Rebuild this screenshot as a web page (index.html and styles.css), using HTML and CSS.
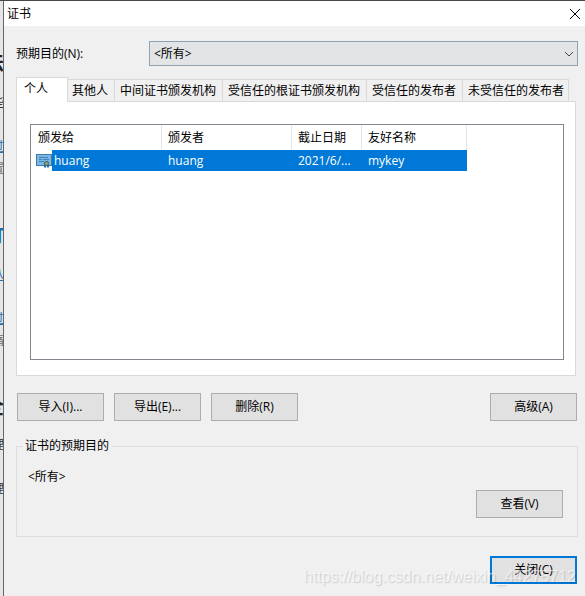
FILE: index.html
```
<!DOCTYPE html>
<html lang="zh-CN">
<head>
<meta charset="utf-8">
<title>证书</title>
<link rel="stylesheet" href="styles.css">
</head>
<body>
<div class="backdrop" aria-hidden="true">
  <span class="line heading first">法</span>
  <span class="line">些</span>
  <span class="line link">过</span>
  <span class="line muted">置</span>
  <span class="line heading link second">竹</span>
  <span class="line link third">八</span>
  <span class="line link">过</span>
  <span class="line muted">痛</span>
  <span class="line heading fourth">全</span>
  <span class="line">理</span>
  <span class="line">理</span>
</div>
<main class="dialog">
  <header class="titlebar">
    <h1>证书</h1>
    <button class="close" type="button" aria-label="关闭窗口">
      <svg viewBox="0 0 12 12" width="12" height="12"><path d="M1 1 11 11M11 1 1 11"/></svg>
    </button>
  </header>
  <div class="content">
    <div class="purpose">
      <label for="purpose">预期目的(N):</label>
      <div class="combo">
        <select id="purpose"><option>&lt;所有&gt;</option></select>
        <svg class="chevron" viewBox="0 0 10 6" width="10" height="6"><path d="M1 1 5 5 9 1"/></svg>
      </div>
    </div>
    <div class="tabs" role="tablist">
      <button class="tab selected" type="button" role="tab" aria-selected="true">个人</button>
      <button class="tab" type="button" role="tab">其他人</button>
      <button class="tab" type="button" role="tab">中间证书颁发机构</button>
      <button class="tab" type="button" role="tab">受信任的根证书颁发机构</button>
      <button class="tab" type="button" role="tab">受信任的发布者</button>
      <button class="tab" type="button" role="tab">未受信任的发布者</button>
    </div>
    <section class="panel">
      <div class="list">
        <table>
          <colgroup><col class="col-to"><col class="col-by"><col class="col-date"><col class="col-name"></colgroup>
          <thead><tr><th>颁发给</th><th>颁发者</th><th>截止日期</th><th>友好名称</th></tr></thead>
          <tbody>
            <tr>
              <td class="subject"><div class="entry">
                <svg class="cert" viewBox="0 0 16 16" width="16" height="16">
                  <rect x=".5" y="1.5" width="15" height="11" fill="#79b7e8" stroke="#3f7da5"/>
                  <path d="M3 4.500h9M3 6.500h3M7 6.500h6M3 8.500h5" stroke="#4384b8" fill="none"/>
                  <path d="M8 11h2v4l-1-1-1 1zM11 11h2v4l-1-1-1 1z" fill="#1769c4"/>
                  <circle cx="10.500" cy="10.500" r="2.200" fill="#6c8d78" stroke="#4b6f63"/>
                  <circle cx="10.500" cy="10.500" r="1" fill="#9aaf83"/>
                </svg><span>huang</span></div></td>
              <td>huang</td><td>2021/6/...</td><td>mykey</td>
            </tr>
          </tbody>
        </table>
      </div>
    </section>
    <div class="actions">
      <button class="btn" type="button">导入(I)...</button>
      <button class="btn" type="button">导出(E)...</button>
      <button class="btn" type="button">删除(R)</button>
      <button class="btn advanced" type="button">高级(A)</button>
    </div>
    <fieldset class="details">
      <legend>证书的预期目的</legend>
      <p>&lt;所有&gt;</p>
      <button class="btn view" type="button">查看(V)</button>
    </fieldset>
    <footer class="footer">
      <button class="btn default" type="button">关闭(C)</button>
    </footer>
  </div>
  <span class="watermark">https://blog.csdn.net/weixin_44275712</span>
</main>
</body>
</html>
```
FILE: styles.css
```
* {
  box-sizing: border-box;
}

body {
  margin: 0;
  min-height: 100vh;
  display: flex;
  background: #e6e5e4;
  border-top: 1px solid #4a4547;
  color: #000;
  font: 12px/16px "Open Sans", "Noto Sans CJK SC", sans-serif;
  overflow: hidden;
}

button,
select {
  font: inherit;
  color: inherit;
  border-radius: 0;
}

.backdrop {
  width: 3px;
  flex: none;
  overflow: hidden;
  display: flex;
  flex-direction: column;
}

.line {
  flex: none;
  width: 12px;
  height: 16px;
  margin: 0 0 28px -8px;
  color: #333;
}

.line.link {
  color: #1a6fb5;
  margin-bottom: 6px;
  text-decoration: underline;
}

.line.muted {
  color: #776b66;
  margin-bottom: 48px;
}

.line.heading {
  width: 20px;
  height: 20px;
  margin-left: -16px;
  font-size: 20px;
  line-height: 20px;
  font-weight: 700;
}

.line.first {
  margin-top: 52px;
  margin-bottom: 22px;
  color: #222;
}

.line.second {
  margin-bottom: 22px;
  text-decoration: none;
}

.line.third {
  margin-bottom: 28px;
}

.line.fourth {
  margin-bottom: 20px;
  color: #222;
}

.dialog {
  position: relative;
  flex: 1;
  min-width: 0;
  background: #f0f0f0;
  border-left: 1px solid #666;
}

.titlebar {
  display: flex;
  align-items: center;
  justify-content: space-between;
  height: 25px;
  padding: 0 4px 0 3px;
  background: #fff;
}

.titlebar h1 {
  margin: 0;
  font: inherit;
}

.close {
  display: flex;
  padding: 0;
  border: 0;
  background: none;
}

.close path {
  fill: none;
  stroke: #000;
}

.content {
  padding: 15px 7px 12px 12px;
}

.purpose {
  display: flex;
  align-items: center;
  margin-bottom: 11px;
}

.purpose label {
  width: 133px;
}

.combo {
  position: relative;
  flex: 1;
}

.combo select {
  display: block;
  width: 100%;
  height: 25px;
  padding: 0 4px;
  border: 1px solid #8ea2b3;
  background: #e2e4e6;
  appearance: none;
}

.chevron {
  position: absolute;
  right: 4px;
  top: 10px;
  pointer-events: none;
}

.chevron path {
  fill: none;
  stroke: #444;
}

.tabs {
  display: flex;
  align-items: flex-end;
  height: 24px;
}

.tab {
  height: 22px;
  padding: 0 6px 0 5px;
  border: solid #d9d9d9;
  border-width: 1px 0 0 1px;
  background: #f0f0f0;
  white-space: nowrap;
}

.tab:last-child {
  padding-right: 4px;
  border-right-width: 1px;
}

.tab.selected {
  position: relative;
  width: 52px;
  height: 25px;
  margin: 0 -2px -1px 0;
  padding: 0 0 2px 7px;
  border-right-width: 1px;
  background: #fff;
  text-align: left;
}

.panel {
  margin-right: 2px;
  padding: 22px 11px 15px 13px;
  border: 1px solid #d9d9d9;
  background: #fff;
}

.list {
  min-height: 236px;
  border: 1px solid #828790;
}

table {
  table-layout: fixed;
  width: 436px;
  border-collapse: collapse;
}

.col-to {
  width: 131px;
}

.col-by {
  width: 130px;
}

.col-date {
  width: 70px;
}

.col-name {
  width: 105px;
}

th,
td {
  padding: 0 0 0 6px;
  text-align: left;
  font-weight: 400;
  white-space: nowrap;
}

th {
  height: 25px;
  background: linear-gradient(#e5e5e5, #e5e5e5) right / 1px 100% no-repeat;
}

th:first-child {
  padding-left: 7px;
}

td {
  height: 21px;
  background: #0078d7;
  color: #fff;
}

td.subject {
  padding-left: 5px;
  background: linear-gradient(90deg, #fff 21px, #0078d7 21px);
}

.entry {
  display: flex;
  align-items: center;
  gap: 2px;
}

.actions {
  display: flex;
  gap: 10px;
  margin: 17px 1px;
}

.btn {
  width: 87px;
  height: 28px;
  padding: 0;
  border: 1px solid #adadad;
  background: #e1e1e1;
}

.advanced {
  margin-left: auto;
}

.details {
  display: flex;
  align-items: flex-start;
  justify-content: space-between;
  margin: 0;
  padding: 15px 14px 18px 11px;
  border: 1px solid #dcdcdc;
}

.details legend {
  margin-left: -5px;
  padding: 0 3px 0 2px;
}

.details p {
  margin: 0;
}

.view {
  margin-top: 21px;
}

.footer {
  display: flex;
  justify-content: flex-end;
  margin: 19px 1px 0;
}

.default {
  border: 2px solid #0078d7;
}

.watermark {
  position: absolute;
  right: 9px;
  bottom: 9px;
  font: 16px/20px "Liberation Sans", sans-serif;
  color: rgba(255, 255, 255, .6);
  text-shadow: 1px 1px 1px rgba(0, 0, 0, .15);
  pointer-events: none;
}
```
